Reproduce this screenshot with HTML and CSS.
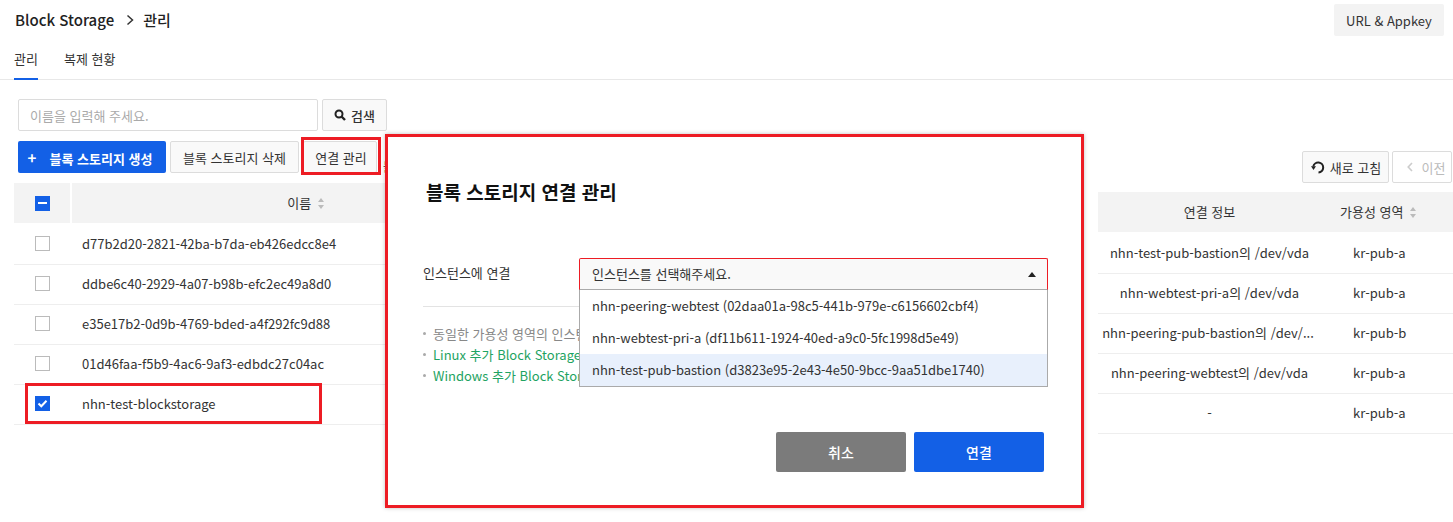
FILE: index.html
```html
<!DOCTYPE html>
<html lang="ko">
<head>
    <meta charset="UTF-8">
    <meta name="viewport" content="width=device-width, initial-scale=1.0">
    <title>Block Storage 관리</title>
    <link rel="stylesheet" href="styles.css">
</head>
<body>
    <div class="topbar">
        <div class="crumbs">
            <span>Block Storage</span>
            <svg class="crumb-arrow" width="9" height="12" viewBox="0 0 9 12"><path d="M1.500 1.500 6.500 6 1.500 10.500" fill="none" stroke="#333" stroke-width="1.500"/></svg>
            <span>관리</span>
        </div>
        <button class="btn-key">URL &amp; Appkey</button>
    </div>
    <div class="tabs">
        <a class="tab active">관리</a>
        <a class="tab">복제 현황</a>
    </div>

    <div class="content">
        <div class="left-panel">
            <div class="search">
                <input class="search-input" placeholder="이름을 입력해 주세요.">
                <button class="btn btn-search">
                    <svg width="12" height="12" viewBox="0 0 12 12"><circle cx="5" cy="5" r="3.500" fill="none" stroke="#222" stroke-width="2"/><path d="M7.500 7.500 11 11" stroke="#222" stroke-width="2.400"/></svg>
                    검색
                </button>
            </div>
            <div class="toolbar">
                <button class="btn btn-create"><span class="plus">+</span>블록 스토리지 생성</button>
                <button class="btn btn-delete">블록 스토리지 삭제</button>
                <button class="btn btn-manage">연결 관리<span class="mark mark-manage"></span></button>
                <span class="toolbar-more">블록</span>
            </div>
            <div class="thead">
                <div class="col-check"><span class="check check-minus"></span></div>
                <div class="col-name">이름 <span class="sort"></span></div>
            </div>
            <div class="row"><div class="col-check"><span class="check"></span></div><div class="row-name">d77b2d20-2821-42ba-b7da-eb426edcc8e4</div></div>
            <div class="row"><div class="col-check"><span class="check"></span></div><div class="row-name">ddbe6c40-2929-4a07-b98b-efc2ec49a8d0</div></div>
            <div class="row"><div class="col-check"><span class="check"></span></div><div class="row-name">e35e17b2-0d9b-4769-bded-a4f292fc9d88</div></div>
            <div class="row"><div class="col-check"><span class="check"></span></div><div class="row-name">01d46faa-f5b9-4ac6-9af3-edbdc27c04ac</div></div>
            <div class="row">
                <div class="col-check">
                    <span class="check check-on">
                        <svg width="15" height="15" viewBox="0 0 15 15"><path d="M3.500 7.500 6.300 10.300 11.500 4.800" fill="none" stroke="#fff" stroke-width="2"/></svg>
                    </span>
                </div>
                <div class="row-name">nhn-test-blockstorage</div>
                <span class="mark mark-row"></span>
            </div>
        </div>

        <div class="right-panel">
            <div class="right-tools">
                <button class="btn btn-refresh">
                    <svg width="14" height="14" viewBox="0 0 14 14"><path d="M2.300 6.500A5 5 0 1 1 7.500 12.500" fill="none" stroke="#222" stroke-width="2"/><path d="M0 6.300H5L2.500 10Z" fill="#222"/></svg>
                    새로 고침
                </button>
                <button class="btn btn-prev">
                    <svg width="6" height="10" viewBox="0 0 6 10"><path d="M5 1 1.200 5 5 9" fill="none" stroke="#ccc" stroke-width="1.600"/></svg>
                    이전
                </button>
            </div>
            <div class="thead">
                <div class="col-conn">연결 정보</div>
                <div class="col-zone">가용성 영역 <span class="sort"></span></div>
            </div>
            <div class="row"><div class="col-conn">nhn-test-pub-bastion의 /dev/vda</div><div class="col-zone">kr-pub-a</div></div>
            <div class="row"><div class="col-conn">nhn-webtest-pri-a의 /dev/vda</div><div class="col-zone">kr-pub-a</div></div>
            <div class="row"><div class="col-conn col-clip">nhn-peering-pub-bastion의 /dev/...</div><div class="col-zone">kr-pub-b</div></div>
            <div class="row"><div class="col-conn">nhn-peering-webtest의 /dev/vda</div><div class="col-zone">kr-pub-a</div></div>
            <div class="row"><div class="col-conn">-</div><div class="col-zone">kr-pub-a</div></div>
        </div>
    </div>

    <div class="modal">
        <h2 class="modal-title">블록 스토리지 연결 관리</h2>
        <div class="form-row">
            <label class="form-label">인스턴스에 연결</label>
            <div class="select-wrap">
                <div class="select-box">인스턴스를 선택해주세요.<span class="caret"></span></div>
                <ul class="select-list">
                    <li>nhn-peering-webtest (02daa01a-98c5-441b-979e-c6156602cbf4)</li>
                    <li>nhn-webtest-pri-a (df11b611-1924-40ed-a9c0-5fc1998d5e49)</li>
                    <li class="selected">nhn-test-pub-bastion (d3823e95-2e43-4e50-9bcc-9aa51dbe1740)</li>
                </ul>
            </div>
        </div>
        <ul class="notes">
            <li>동일한 가용성 영역의 인스턴스</li>
            <li class="link">Linux 추가 Block Storage</li>
            <li class="link">Windows 추가 Block Storage</li>
        </ul>
        <div class="modal-actions">
            <button class="btn-big btn-cancel">취소</button>
            <button class="btn-big btn-connect">연결</button>
        </div>
    </div>
</body>
</html>
```

FILE: styles.css
```css
* { box-sizing: border-box; }
html, body { height: 522px; overflow: hidden; }
body { margin: 0; position: relative; background-color: #fff; color: #333; font-family: "Noto Sans CJK KR", "Noto Sans", sans-serif; font-size: 13px; }
button { font-family: inherit; cursor: pointer; }
ul { list-style: none; margin: 0; padding: 0; }

.topbar { display: flex; justify-content: space-between; padding: 4px 9px 0 15px; height: 46px; }
.crumbs { display: flex; align-items: center; gap: 10px; height: 31px; font-size: 15px; font-weight: 500; color: #222; }
.crumb-arrow { margin: 0 -2px 0 2px; }
.btn-key { width: 110px; height: 32px; border: 0; border-radius: 2px; background-color: #f3f3f3; color: #333; font-size: 13px; }

.tabs { display: flex; gap: 26px; height: 34px; padding-left: 14px; border-bottom: 1px solid #e8e8e8; }
.tab { height: 34px; line-height: 25px; font-size: 13px; color: #333; }
.tab.active { border-bottom: 2px solid #1360e6; }

.content { display: flex; justify-content: space-between; }
.left-panel { width: 386px; padding: 19px 0 0 14px; }
.right-panel { width: 355px; padding-top: 71px; }

.btn { flex-shrink: 0; height: 32px; border: 1px solid #dcdcdc; border-radius: 2px; background-color: #f9f9f9; color: #333; font-size: 13px; padding: 0; }
.search { display: flex; gap: 4px; margin-left: 4px; }
.search-input { flex-shrink: 0; width: 300px; height: 32px; padding: 0 11px; border: 1px solid #dcdcdc; border-radius: 2px; font-family: inherit; font-size: 13px; }
.search-input::placeholder { color: #aaa; }
.btn-search { width: 65px; font-weight: 500; display: flex; align-items: center; justify-content: center; gap: 5px; }

.toolbar { display: flex; gap: 4px; margin: 10px 0 10px 4px; }
.btn-create { width: 148px; padding-right: 4px; border: 0; background-color: #1360e6; color: #fff; font-weight: 700; }
.plus { margin-right: 13px; font-size: 15px; }
.btn-delete { width: 129px; }
.btn-manage { width: 74px; padding-left: 2px; position: relative; }
.toolbar-more { align-self: flex-end; margin-left: 2px; font-size: 12px; line-height: 12px; white-space: nowrap; }

.thead { display: flex; height: 40px; margin-bottom: 2px; background-color: #f3f3f3; align-items: center; }
.thead .col-name, .thead .col-conn, .thead .col-zone { padding-bottom: 2px; }
.row { display: flex; height: 40px; padding-bottom: 2px; align-items: center; border-bottom: 1px solid #eee; position: relative; }
.left-panel .thead .col-check { border-right: 2px solid #fff; }
.col-check { width: 58px; height: 37px; display: flex; align-items: center; padding-left: 21px; flex-shrink: 0; }
.thead .col-check { height: 40px; }
.col-name { flex: 1; text-align: center; padding-left: 154px; }
.row-name { padding-left: 10px; white-space: nowrap; }

.check { display: block; width: 15px; height: 15px; border: 1px solid #bbb; background-color: #fff; }
.check-minus { border: 0; background-color: #1360e6; position: relative; }
.check-minus::after { content: ""; position: absolute; left: 3px; top: 6px; width: 9px; height: 2px; background-color: #fff; }
.check-on { border: 0; background-color: #1360e6; }
.check-on svg { display: block; }

.sort { display: inline-block; width: 7px; height: 11px; margin-left: 3px; vertical-align: -1px; position: relative; }
.sort::before, .sort::after { content: ""; position: absolute; left: 0; border-left: 3.500px solid transparent; border-right: 3.500px solid transparent; }
.sort::before { top: 0; border-bottom: 4.500px solid #bbb; }
.sort::after { bottom: 0; border-top: 4.500px solid #bbb; }

.right-tools { display: flex; justify-content: flex-end; gap: 3px; margin: 0 1px 9px 0; }
.btn-refresh { width: 87px; padding-left: 1px; display: flex; align-items: center; justify-content: center; gap: 5px; }
.btn-prev { width: 60px; padding-left: 8px; color: #bbb; background-color: #fff; display: flex; align-items: center; justify-content: center; gap: 9px; }
.col-conn { width: 223px; text-align: center; white-space: nowrap; }
.col-clip { padding-right: 3px; }
.col-zone { flex: 1; padding-left: 19px; white-space: nowrap; text-align: left; }
.row .col-zone { padding-left: 32px; }

.mark { position: absolute; border: 3px solid #ed1c24; pointer-events: none; }
.mark-manage { left: -3px; top: -5px; width: 80px; height: 38px; }
.mark-row { left: 11px; top: -2px; width: 297px; height: 41px; }

.modal { position: absolute; left: 385px; top: 134px; width: 699px; height: 374px; padding: 42px 33px 0 35px; background-color: #fff; border: 3px solid #ed1c24; box-shadow: 0 0 4px rgba(0, 0, 0, 0.25); }
.modal-title { margin: 0 0 0 3px; font-size: 19px; font-weight: 700; line-height: 26px; color: #111; }
.form-row { display: flex; align-items: flex-start; margin-top: 53px; border-bottom: 1px solid #e3e3e3; height: 49px; }
.form-label { width: 156px; flex-shrink: 0; line-height: 30px; font-size: 13px; }
.select-wrap { position: relative; width: 469px; flex-shrink: 0; z-index: 2; }
.select-box { height: 32px; padding-left: 12px; line-height: 29px; border: 1px solid #ed1c24; border-bottom-color: #aaa; border-radius: 2px 2px 0 0; background-color: #f9f9f9; position: relative; }
.caret { position: absolute; right: 11px; top: 13px; border-left: 4px solid transparent; border-right: 4px solid transparent; border-bottom: 5px solid #222; }
.select-list { border: 1px solid #aaa; border-top: 0; background-color: #fff; }
.select-list li { height: 32px; padding-left: 12px; line-height: 31px; white-space: nowrap; }
.select-list .selected { background-color: #e8f0fc; }

/* the open list covers the rest of these lines */
.notes { width: 156px; overflow: hidden; margin-top: 16px; font-size: 13px; line-height: 21px; color: #888; }
.notes li { padding-left: 10px; position: relative; white-space: nowrap; }
.notes li::before { content: ""; position: absolute; left: 0; top: 9px; width: 3px; height: 3px; border-radius: 50%; background-color: #aaa; }
.notes .link { color: #1ea362; }

.modal-actions { display: flex; justify-content: flex-end; gap: 8px; margin: 46px 4px 0 0; }
.btn-big { width: 130px; height: 40px; border: 0; border-radius: 2px; color: #fff; font-size: 14px; font-weight: 500; }
.btn-cancel { background-color: #7b7b7b; }
.btn-connect { background-color: #1360e6; }
```
